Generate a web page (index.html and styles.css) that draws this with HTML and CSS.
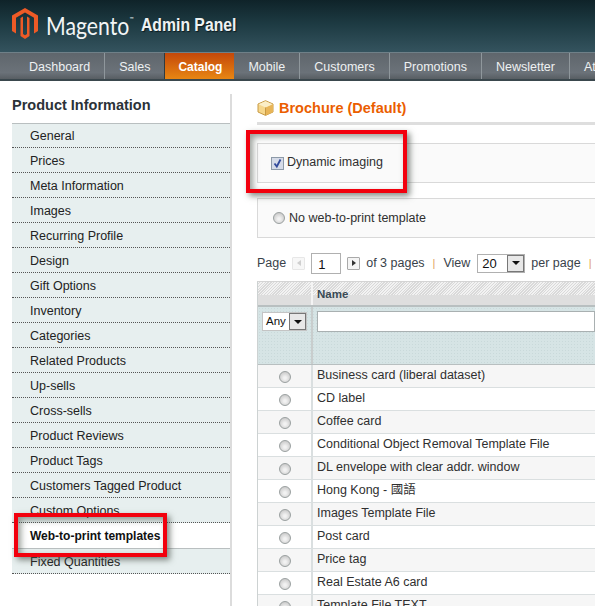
FILE: index.html
```html
<!DOCTYPE html>
<html lang="en">
<head>
<meta charset="utf-8">
<title>Magento Admin Panel</title>
<link rel="stylesheet" href="styles.css">
</head>
<body>
<div class="page">
  <header class="header">
    <svg class="logo" width="26" height="31" viewBox="12 8 26 31">
      <path fill="#ee5a26" d="M25 8L38 15.5V31L34 33.5V17.8L25 12.6L16 17.8V33.5L12 31V15.5Z"/>
      <path fill="#ee5a26" d="M20.5 18L23 16.5V34L25 35.2L27 34V16.5L29.5 18V36L25 39L20.5 36Z"/>
    </svg>
    <span class="brand"><span class="brand-text">Magento<sup class="tm">™</sup></span></span>
    <span class="panel">Admin Panel</span>
  </header>
  <nav class="nav">
    <a class="nav-item">Dashboard</a>
    <a class="nav-item">Sales</a>
    <a class="nav-item active">Catalog</a>
    <a class="nav-item">Mobile</a>
    <a class="nav-item">Customers</a>
    <a class="nav-item">Promotions</a>
    <a class="nav-item">Newsletter</a>
    <a class="nav-item">Attributes</a>
  </nav>
  <main class="main">
    <aside class="side">
      <h3 class="side-title">Product Information</h3>
      <ul class="tabs">
        <li class="tab">General</li>
        <li class="tab">Prices</li>
        <li class="tab">Meta Information</li>
        <li class="tab">Images</li>
        <li class="tab">Recurring Profile</li>
        <li class="tab">Design</li>
        <li class="tab">Gift Options</li>
        <li class="tab">Inventory</li>
        <li class="tab">Categories</li>
        <li class="tab">Related Products</li>
        <li class="tab">Up-sells</li>
        <li class="tab">Cross-sells</li>
        <li class="tab">Product Reviews</li>
        <li class="tab">Product Tags</li>
        <li class="tab">Customers Tagged Product</li>
        <li class="tab">Custom Options</li>
        <li class="tab current">Web-to-print templates</li>
        <li class="tab">Fixed Quantities</li>
      </ul>
    </aside>
    <section class="content">
      <div class="head">
        <svg class="cube" width="17" height="16" viewBox="0 0 17 16">
          <path fill="#f6d78c" stroke="#c79a45" d="M8.5.7L16 4v8l-7.5 3.4L1 12V4Z"/>
          <path fill="#e8b558" d="M8.5 7.5L16 4v8l-7.5 3.4Z"/>
          <path fill="#fbeec6" d="M8.5 7.5L1.5 4.2 8.5 1.2l7 3Z"/>
          <path fill="none" stroke="#c79a45" d="M8.5 7.5V15"/>
        </svg>
        <h3 class="title">Brochure (Default)</h3>
      </div>
      <div class="box box-check">
        <input class="check" type="checkbox" checked>
        <span>Dynamic imaging</span>
      </div>
      <div class="box box-radio">
        <input class="radio" type="radio">
        <span>No web-to-print template</span>
      </div>
      <div class="pager">
        <span class="p-page">Page</span>
        <span class="pbtn off"><i class="tri left"></i></span>
        <span class="pinput">1</span>
        <span class="pbtn"><i class="tri right"></i></span>
        <span class="p-of">of 3 pages</span>
        <span class="bar">|</span>
        <span>View</span>
        <span class="pselect">20<i class="drop"><i class="tri down"></i></i></span>
        <span>per page</span>
        <span class="bar">|</span>
      </div>
      <div class="grid">
        <div class="ghead">
          <div class="c1"></div>
          <div class="c2">Name</div>
        </div>
        <div class="gfilter">
          <div class="c1"><span class="any">Any<i class="drop"><i class="tri down"></i></i></span></div>
          <div class="c2"><span class="ftext"></span></div>
        </div>
        <div class="row"><div class="c1"><input class="radio" type="radio"></div><div class="c2">Business card (liberal dataset)</div></div>
        <div class="row"><div class="c1"><input class="radio" type="radio"></div><div class="c2">CD label</div></div>
        <div class="row"><div class="c1"><input class="radio" type="radio"></div><div class="c2">Coffee card</div></div>
        <div class="row"><div class="c1"><input class="radio" type="radio"></div><div class="c2">Conditional Object Removal Template File</div></div>
        <div class="row"><div class="c1"><input class="radio" type="radio"></div><div class="c2">DL envelope with clear addr. window</div></div>
        <div class="row"><div class="c1"><input class="radio" type="radio"></div><div class="c2">Hong Kong - 國語</div></div>
        <div class="row"><div class="c1"><input class="radio" type="radio"></div><div class="c2">Images Template File</div></div>
        <div class="row"><div class="c1"><input class="radio" type="radio"></div><div class="c2">Post card</div></div>
        <div class="row"><div class="c1"><input class="radio" type="radio"></div><div class="c2">Price tag</div></div>
        <div class="row"><div class="c1"><input class="radio" type="radio"></div><div class="c2">Real Estate A6 card</div></div>
        <div class="row"><div class="c1"><input class="radio" type="radio"></div><div class="c2">Template File TEXT</div></div>
      </div>
    </section>
  </main>
  <div class="mark mark-a"></div>
  <div class="mark mark-b"></div>
</div>
</body>
</html>
```
FILE: styles.css
```css
* { box-sizing: border-box; }
html, body { margin: 0; padding: 0; background: #fff; }
body { font-family: "Liberation Sans", Arial, "Noto Sans CJK TC", sans-serif; font-size: 12.5px; color: #2f2f2f; }
.page { position: relative; width: 595px; height: 606px; overflow: hidden; }

.header { height: 52px; display: flex; align-items: flex-start; padding: 8px 0 0 12px; background: linear-gradient(#0f2329, #1d3a42 45%, #34535e); }
.logo { flex: none; }
.brand { flex: none; width: 95px; margin: 1px 0 0 8px; }
.brand-text { display: block; font-family: Lato, sans-serif; font-size: 25px; line-height: 32px; color: #f2f5f6; white-space: nowrap; transform: scaleX(.85); transform-origin: left center; }
.tm { font-size: 6px; vertical-align: 14px; line-height: 0; }
.panel { flex: none; margin-top: 5px; font-weight: 700; font-size: 18px; line-height: 24px; color: #eef2f3; text-shadow: 1px 1px 1px #0c1b20; white-space: nowrap; transform: scaleX(.875); transform-origin: left center; }

.nav { height: 29px; display: flex; padding-left: 15px; border-top: 1px solid #6f8088; border-bottom: 2px solid #3a474d; background: linear-gradient(#5f666c, #6b7279 75%, #585e63); overflow: hidden; }
.nav-item { flex: none; padding: 0 14px; font-size: 12.5px; line-height: 28px; color: #eef1f2; border-right: 1px solid #8f979c; white-space: nowrap; }
.nav-item.active { margin-left: -1px; width: 70px; padding: 0 0 0 13px; border-left: 1px solid #2f3a40; border-right: 0; background: linear-gradient(#c4480a, #e88613); font-weight: 700; font-size: 12px; color: #fff; }

.main { display: flex; align-items: flex-start; }
.side { flex: none; width: 220px; height: 513px; margin-top: 13px; margin-left: 12px; border-right: 2px solid #dcdcdc; }
.side-title { margin: 0; height: 29px; font-size: 14.5px; line-height: 22px; font-weight: 700; color: #2b3238; }
.tabs { margin: 0; padding: 0; list-style: none; border-top: 1px solid #b9bfc0; }
.tab { height: 25px; padding-left: 18px; line-height: 26px; background: #e7efef; border-bottom: 1px dotted #555; color: #222; }
.tab:first-child { height: 24px; line-height: 24px; }
.tab.current { height: 26px; line-height: 26px; background: #fff; font-weight: 700; font-size: 12px; border-bottom: 1px solid #b9bfc0; color: #111; }

.content { flex: none; width: 338px; margin-left: 25px; }
.head { display: flex; align-items: center; gap: 5px; height: 28px; margin-top: 13px; box-shadow: 0 3px 0 0 #dedede; }
.cube { flex: none; }
.title { margin: 0; font-size: 14.5px; font-weight: 700; color: #eb5e00; white-space: nowrap; }
.box { height: 40px; display: flex; align-items: center; background: #fafafa; border: 1px solid #d9d9d9; border-right: 0; }
.box-check { margin-top: 21px; padding-left: 13px; gap: 3px; }
.box-check span { margin-top: -3px; }
.box-radio { margin-top: 15px; padding-left: 15px; gap: 4px; }
.box-radio span { margin-top: -1px; }

.check { appearance: none; flex: none; margin: 0; width: 13px; height: 13px; border: 1px solid #8d9aa8; background: #d5dbe8 url("data:image/svg+xml,%3Csvg xmlns='http://www.w3.org/2000/svg' viewBox='0 0 11 11'%3E%3Cpath fill='none' stroke='%23324a9b' stroke-width='1.8' d='M2.5 5.5L4.8 8.5L8.5 1.5'/%3E%3C/svg%3E") center/11px 11px no-repeat; }
.radio { appearance: none; display: block; flex: none; margin: 0; width: 12px; height: 12px; border-radius: 50%; border: 1px solid #9aa0a0; background: radial-gradient(circle at 50% 60%, #f2f2f2 15%, #cfcfcf 70%, #bbb); }

.pager { display: flex; align-items: center; height: 22px; margin-top: 14px; white-space: nowrap; color: #39424a; }
.pager > span { flex: none; }
.p-page { margin-right: 6px; }
.pbtn { width: 13px; height: 13px; display: flex; align-items: center; justify-content: center; background: #f4f4f4; border: 1px solid #a9a9a9; border-radius: 1px; }
.pbtn.off { border-color: #ddd; opacity: .7; }
.pinput { width: 30px; height: 21px; margin: 0 6px; padding-left: 6px; line-height: 22px; font-size: 13px; background: #fff; border: 1px solid #b0b0b0; color: #111; }
.p-of { margin-left: 6px; }
.bar { margin: 0 8px; color: #e0a060; font-size: 11px; }
.pselect { position: relative; width: 48px; height: 19px; margin: 0 6px 0 7px; padding-left: 4px; line-height: 18px; font-size: 13px; background: #fff; border: 1px solid #b0b0b0; color: #111; }
.drop { position: absolute; right: 0; top: 0; bottom: 0; width: 17px; display: flex; align-items: center; justify-content: center; background: #e8e8e8; border: 1px solid #777; }
.tri { display: block; width: 0; height: 0; border-style: solid; border-color: transparent; }
.tri.left { border-width: 3px 4px 3px 0; border-right-color: #bbb; }
.tri.right { border-width: 3px 0 3px 4px; border-left-color: #333; }
.tri.down { border-width: 4px 4px 0 4px; border-top-color: #111; }

.grid { width: 338px; margin-top: 7px; border-top: 1px solid #d4d4d4; border-left: 1px solid #cdd2d2; }
.ghead, .gfilter, .row { display: flex; }
.c1 { flex: none; width: 55px; border-right: 2px solid #c8cdcd; }
.c2 { flex: auto; padding-left: 4px; white-space: nowrap; }
.ghead { height: 25px; border-bottom: 2px solid #b8bfc0; background: linear-gradient(transparent 13px, #dedede 13px), repeating-linear-gradient(135deg, #f2f2f2 0 1px, #d9d9d9 1px 2px); font-weight: 700; font-size: 11.5px; line-height: 24px; color: #3a4a55; }
.ghead .c1 { border-right-color: #f4f4f4; }
.gfilter { height: 58px; border-bottom: 1px solid #b8bfc0; background: #d6e4e5 radial-gradient(#c9d9da 1px, transparent 1px) 0 0/3px 3px; }
.gfilter .c1 { padding: 5px 0 0 4px; }
.any { position: relative; display: block; width: 45px; height: 19px; padding-left: 3px; line-height: 17px; font-size: 11.5px; background: #fff; border: 1px solid #c4c4c4; color: #111; }
.gfilter .c2 { padding-top: 4px; }
.ftext { display: block; width: 100%; height: 21px; background: #fff; border: 1px solid #a9b0b1; }
.row { height: 23px; line-height: 21px; border-bottom: 1px solid #dadfe0; background: #fff; }
.row:nth-child(odd) { background: #f6f6f6; }
.row .c1 { display: flex; justify-content: center; padding-top: 6px; border-right-color: #dadfe0; }

.mark { position: absolute; border: 4px solid #f2000d; box-shadow: 3px 3px 6px rgba(70, 80, 70, .65), inset 3px 3px 6px rgba(70, 80, 70, .55); }
.mark-a { left: 246px; top: 130px; width: 161px; height: 63px; }
.mark-b { left: 14px; top: 513px; width: 153px; height: 44px; }
```
